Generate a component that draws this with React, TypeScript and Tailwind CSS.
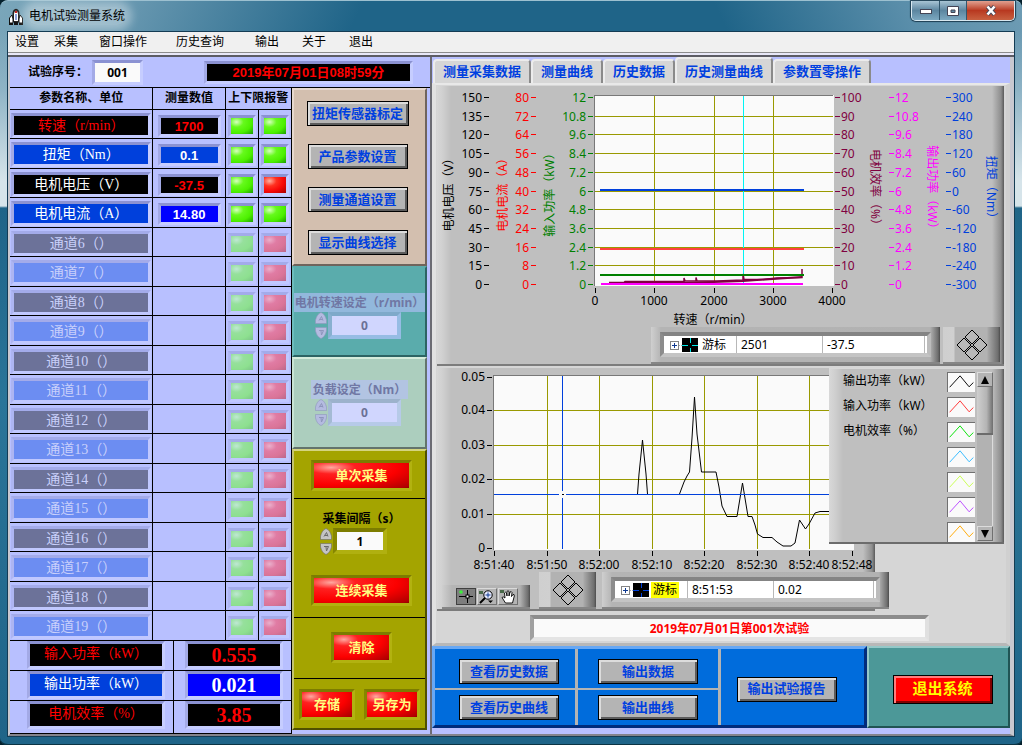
import React from "react";
import clsx from "clsx";

const UI = "font-['Noto_Sans','Noto_Sans_CJK_SC',sans-serif]";
const SONG = "font-['Liberation_Serif','Noto_Sans_CJK_SC',serif]";
const HEI = "font-['Liberation_Sans','Noto_Sans_CJK_SC',sans-serif]";

const BEVEL = "border-3 border-t-[#8b92d2] border-l-[#a3aae6] border-r-[#c6cdff] border-b-[#c6cdff]";
const BEVEL_DIM = "border-3 border-t-[#a3abea] border-l-[#adb5f2] border-r-[#c0c8ff] border-b-[#c0c8ff]";

type Level = "ok" | "bad" | "okDim" | "badDim";

const LED: Record<Level, string> = {
  ok: "bg-[radial-gradient(ellipse_at_25%_25%,#d8ffc0_0%,#66fa1c_30%,#4cf000_65%,#1c9a00_100%)]",
  bad: "bg-[radial-gradient(ellipse_at_25%_25%,#ffb0a0_0%,#ff3020_30%,#f80808_60%,#a80000_100%)]",
  okDim: "bg-[radial-gradient(ellipse_at_25%_25%,#bfe8d4_0%,#96e09c_30%,#8ee090_65%,#7cc488_100%)]",
  badDim: "bg-[radial-gradient(ellipse_at_25%_25%,#eab0cc_0%,#e07ca4_30%,#da7498_65%,#b8688c_100%)]",
};

function Led({ level, label }: { level: Level; label: string }) {
  const dim = level.endsWith("Dim");
  return (
    <span
      role="img"
      aria-label={label}
      className={clsx("mx-auto mt-[5px] block h-[22px] w-[28px]", dim ? BEVEL_DIM : BEVEL, LED[level])}
    />
  );
}

const params = [
  { name: "转速（r/min）", cls: "bg-black text-[#f00]", value: "1700", vcls: "bg-black text-[#f00]", low: "ok", high: "ok" },
  { name: "扭矩（Nm）", cls: "bg-[#0040dc] text-white", value: "0.1", vcls: "bg-[#0040dc] text-white", low: "ok", high: "ok" },
  { name: "电机电压（V）", cls: "bg-black text-white", value: "-37.5", vcls: "bg-black text-[#f00]", low: "ok", high: "bad" },
  { name: "电机电流（A）", cls: "bg-[#0040dc] text-white", value: "14.80", vcls: "bg-[#0000ff] text-white", low: "ok", high: "ok" },
] as const;

const channels = [6, 7, 8, 9, 10, 11, 12, 13, 14, 15, 16, 17, 18, 19];

const CELL = "border-b border-l border-black p-0 align-top first:border-l-0";

function ParameterTable() {
  return (
    <table className="w-full table-fixed border-separate border-spacing-0">
      <colgroup>
        <col className="w-[142px]" />
        <col className="w-[72px]" />
        <col className="w-[33px]" />
        <col className="w-[33px]" />
      </colgroup>
      <thead>
        <tr className={clsx("h-[22px] text-[12px] leading-[20px]", UI)}>
          <th className={CELL}>参数名称、单位</th>
          <th className={CELL}>测量数值</th>
          <th className={CELL} colSpan={2}>上下限报警</th>
        </tr>
      </thead>
      <tbody>
        {params.map((p) => (
          <tr key={p.name} className="odd:h-[29px] even:h-[30px]">
            <td className={CELL}>
              <div className={clsx("mx-px mt-[3px] h-[25px] text-center text-[14px] leading-[19px]", BEVEL, p.cls, SONG)}>{p.name}</div>
            </td>
            <td className={CELL}>
              <div className={clsx("mx-auto mt-[5px] h-[22px] w-[63px] text-center text-[13px] leading-[17px] font-bold", BEVEL, p.vcls, HEI)}>{p.value}</div>
            </td>
            <td className={CELL}><Led level={p.low} label="下限" /></td>
            <td className={CELL}><Led level={p.high} label="上限" /></td>
          </tr>
        ))}
        {channels.map((n) => (
          <tr key={n} className="odd:h-[29px] even:h-[30px]">
            <td className={CELL}>
              <div
                className={clsx(
                  "mx-px mt-[3px] h-[25px] text-center text-[14px] leading-[19px] text-[#c9d0fb]",
                  BEVEL_DIM,
                  SONG,
                  n % 2 ? "bg-[#6c8df2]" : "bg-[#6c7299]",
                )}
              >
                通道{n}（）
              </div>
            </td>
            <td className={CELL} />
            <td className={CELL}><Led level="okDim" label="下限" /></td>
            <td className={CELL}><Led level="badDim" label="上限" /></td>
          </tr>
        ))}
      </tbody>
    </table>
  );
}

const totals = [
  { name: "输入功率（kW）", value: "0.555", cls: "bg-black text-[#f00]", vcls: "bg-black text-[#f00]" },
  { name: "输出功率（kW）", value: "0.021", cls: "bg-[#0040dc] text-white", vcls: "bg-[#0000ff] text-white" },
  { name: "电机效率（%）", value: "3.85", cls: "bg-black text-[#f00]", vcls: "bg-black text-[#f00]" },
];

function TotalsTable() {
  return (
    <table className="w-full table-fixed border-separate border-spacing-0">
      <colgroup>
        <col className="w-[163px]" />
        <col />
      </colgroup>
      <tbody>
        {totals.map((t) => (
          <tr key={t.name} className="h-[30px] last:h-[33px]">
            <td className={CELL}>
              <div className={clsx("ml-[17px] h-[28px] w-[138px] text-center text-[14px] leading-[20px]", BEVEL, t.cls, SONG)}>{t.name}</div>
            </td>
            <td className={CELL}>
              <div className={clsx("ml-[11px] h-[28px] w-[98px] text-center text-[20px] leading-[23px] font-bold", BEVEL, t.vcls, SONG)}>{t.value}</div>
            </td>
          </tr>
        ))}
      </tbody>
    </table>
  );
}

function GrayButton({ children, className }: { children: string; className?: string }) {
  return (
    <button
      type="button"
      className={clsx(
        "h-[25px] border border-black bg-[#b4b4b4] text-[13px] leading-[22px] font-bold whitespace-nowrap text-[#0040e0]",
        "shadow-[inset_2px_2px_0_#dcdcdc,inset_-2px_-2px_0_#5c5c5c]",
        HEI,
        className,
      )}
    >
      {children}
    </button>
  );
}

function RedButton({ children, className }: { children: string; className: string }) {
  return (
    <button
      type="button"
      className={clsx(
        "h-[31px] border-3 border-t-[#7c7c00] border-l-[#868600] border-r-[#b2b210] border-b-[#b2b210] text-[13px] leading-[24px] font-bold text-[#ffff80]",
        "bg-[radial-gradient(ellipse_at_18%_18%,#ffa8a0_0%,#ff2020_22%,#fc0000_60%,#b00000_95%,#8c0000_100%)]",
        HEI,
        className,
      )}
    >
      {children}
    </button>
  );
}

function Spinner({ dim }: { dim?: boolean }) {
  const fill = dim ? "#b4bbe0" : "#c4c4c4";
  const edge = dim ? "#8e95bd" : "#6a6a6a";
  return (
    <span className="flex w-[13px] shrink-0 flex-col gap-[3px]">
      <button type="button" aria-label="增加" className="block h-3">
        <svg viewBox="0 0 12 12" className="size-3">
          <path d="M0.5 11.5V8Q2 2 6 0.5Q10 2 11.5 8V11.5Z" fill={fill} stroke={edge} strokeWidth="0.6" />
          <path d="M4 8.500L6.500 4.500L8 8.500M5 7.500H8" fill="none" stroke={edge} />
        </svg>
      </button>
      <button type="button" aria-label="减少" className="block h-3">
        <svg viewBox="0 0 12 12" className="size-3">
          <path d="M0.5 0.5V4Q2 10 6 11.500Q10 10 11.500 4V0.5Z" fill={fill} stroke={edge} strokeWidth="0.6" />
          <path d="M4 3.500H8.500L6.500 8L6 4" fill="none" stroke={edge} />
        </svg>
      </button>
    </span>
  );
}

function DimSetting({ id, label, labelClass, tone }: { id: string; label: string; labelClass: string; tone: string }) {
  return (
    <>
      <label htmlFor={id} className={clsx("block text-center text-[12px] leading-[19px] font-bold whitespace-nowrap text-[#7077a4]", labelClass)}>
        {label}
      </label>
      <div className="ml-[21px] flex">
        <Spinner dim />
        <input
          id={id}
          defaultValue="0"
          disabled
          className={clsx("h-[27px] w-[73px] border-4 bg-[#d0d6fe] text-center text-[12px] font-bold text-[#6b7196]", tone)}
        />
      </div>
    </>
  );
}

function Controls() {
  return (
    <div className={clsx("flex w-[135px] shrink-0 flex-col", UI)}>
      <section className="flex h-[178px] flex-col items-center gap-[18px] border-2 border-t-[#e6d8ce] border-r-[#70645c] border-b-[#70645c] border-l-[#e6d8ce] bg-[#d3bfaf] pt-[11px] pr-1">
        <GrayButton className="w-[102px]">扭矩传感器标定</GrayButton>
        <GrayButton className="w-[100px]">产品参数设置</GrayButton>
        <GrayButton className="w-[100px]">测量通道设置</GrayButton>
        <GrayButton className="w-[100px]">显示曲线选择</GrayButton>
      </section>
      <section className="h-[91px] border-2 border-t-[#5cacac] border-r-[#2c6464] border-b-[#2c6464] border-l-[#6cbcbc] bg-[#5aacac] pt-[25px]">
        <DimSetting id="speed" label="电机转速设定（r/min）" labelClass="bg-[#92b8dc]" tone="border-t-[#7ea9ca] border-l-[#88b0d0] border-r-[#96bce4] border-b-[#96bce4]" />
      </section>
      <section className="h-[92px] border-2 border-t-[#d4ecdc] border-r-[#64746c] border-b-[#64746c] border-l-[#c8e4d4] bg-[#accebe] pt-[21px]">
        <DimSetting id="load" label="负载设定（Nm）" labelClass="mx-auto w-[97px] bg-[#b2c4e2]" tone="border-t-[#9cb2cc] border-l-[#a4bad4] border-r-[#b6cae8] border-b-[#b6cae8]" />
      </section>
      <section className="border-2 border-t-[#d4d480] border-r-[#505000] border-b-[#505000] border-l-[#c4c470] bg-[#a4a400]">
        <div className="flex h-[48px] justify-center border-b border-black pt-[9px] pl-1">
          <RedButton className="w-[101px]">单次采集</RedButton>
        </div>
        <div className="flex h-[119px] flex-col items-center border-b border-black pt-[10px] pl-1">
          <label htmlFor="interval" className="text-[12px] leading-[19px] font-bold">采集间隔（s）</label>
          <div className="-ml-4 flex">
            <Spinner />
            <input
              id="interval"
              defaultValue="1"
              className="h-[26px] w-[54px] border-4 border-t-[#7c7c00] border-r-[#b0b010] border-b-[#b0b010] border-l-[#868600] bg-[#fafafa] text-center text-[12px] font-bold text-black"
            />
          </div>
          <RedButton className="mt-5 w-[101px]">连续采集</RedButton>
        </div>
        <div className="flex h-[61px] justify-center border-b border-black pt-[14px] pl-1">
          <RedButton className="w-[61px]">清除</RedButton>
        </div>
        <div className="flex h-[49px] justify-center gap-[9px] pt-[10px]">
          <RedButton className="w-[56px]">存储</RedButton>
          <RedButton className="w-[56px]">另存为</RedButton>
        </div>
      </section>
    </div>
  );
}

/* ---------- speed chart ---------- */

const PLOT = { left: 158, right: 396, top: 11, bottom: 198 };
const steps = Array.from({ length: 11 }, (_, i) => i);
const yStep = (i: number) => Math.round(PLOT.bottom - ((PLOT.bottom - PLOT.top) * i) / 10) + 0.5;

const axesLeft = [
  { x: 45, color: "#000", title: "电机电压（V）", tx: 12, values: steps.map((i) => `${i * 15}`) },
  { x: 92, color: "#f00", title: "电机电流（A）", tx: 66, values: steps.map((i) => `${i * 8}`) },
  { x: 149, color: "#008000", title: "输入功率（kW）", tx: 113, values: steps.map((i) => `${Number((i * 1.2).toFixed(1))}`) },
];
const axesRight = [
  { x: 398, color: "#7f0040", title: "电机效率（%）", tx: 438, cy: 104, values: steps.map((i) => `${i * 10}`) },
  { x: 452, color: "#f0f", title: "输出功率（kW）", tx: 495, cy: 104, values: steps.map((i) => `${Number((i * 1.2).toFixed(1))}`) },
  { x: 509, color: "#0040dc", title: "扭矩（Nm）", tx: 554, cy: 104, values: steps.map((i) => `${i * 60 - 300}`) },
];

function SpeedChart() {
  return (
    <svg width="566" height="241" viewBox="0 0 566 241" className={clsx("block text-[12px]", UI)} role="img" aria-label="历史测量曲线">
      <rect x="157" y="9" width="240" height="191" fill="#fafafa" />
      <path d="M157 9.500H396M157.500 9V200" stroke="#787878" fill="none" />
      <g stroke="#999900">
        {steps.slice(1, 10).map((i) => <path key={i} d={`M158 ${yStep(i)}H396`} />)}
        <path d="M217.500 10V199M277.500 10V199M336.500 10V199" />
      </g>
      <path d="M306.500 10V199" stroke="#00f4f4" />
      <path d="M163 104H367" stroke="#0040dc" strokeWidth="2" />
      <path d="M163 163H367" stroke="#ff4040" strokeWidth="2" />
      <path d="M172 196.500H187L188 195.500H247V192L248 195H259V191.500L260 195H280L306 194V188L307 193.500H324L340 192L365 191.500V183" stroke="#7f0040" strokeWidth="1.500" fill="none" />
      <path d="M187 197H247L306 195L365 191" stroke="#7f0040" strokeWidth="2" fill="none" />
      <path d="M163 189H367" stroke="#008000" strokeWidth="2" />
      <path d="M164 198H366" stroke="#f0f" strokeWidth="2" />
      {axesLeft.map((a) => (
        <g key={a.title} fill={a.color}>
          {a.values.map((v, i) => (
            <g key={i}>
              <text x={a.x} y={yStep(i) + 4} textAnchor="end">{v}</text>
              <path d={`M${a.x + 2} ${yStep(i)}h5`} stroke={a.color} />
            </g>
          ))}
          <text transform={`rotate(-90 ${a.tx} 106)`} x={a.tx} y="110" textAnchor="middle">{a.title}</text>
        </g>
      ))}
      {axesRight.map((a) => (
        <g key={a.title} fill={a.color}>
          {a.values.map((v, i) => (
            <g key={i}>
              <text x={a.x + 6} y={yStep(i) + 4}>{v}</text>
              <path d={`M${a.x} ${yStep(i)}h5`} stroke={a.color} />
            </g>
          ))}
          <text transform={`rotate(90 ${a.tx} ${a.cy})`} x={a.tx} y={a.cy + 4} textAnchor="middle">{a.title}</text>
        </g>
      ))}
      {[158, 217, 277, 336, 395].map((x, i) => (
        <g key={x}>
          <path d={`M${x + 0.5} 202v5`} stroke="#000" />
          <text x={x} y="219" textAnchor="middle">{i * 1000}</text>
        </g>
      ))}
      <text x="276" y="238" textAnchor="middle">转速（r/min）</text>
    </svg>
  );
}

/* ---------- time chart ---------- */

const timeTicks: [number, string][] = [
  [57, "8:51:40"], [110, "8:51:50"], [162, "8:52:00"], [215, "8:52:10"],
  [267, "8:52:20"], [320, "8:52:30"], [372, "8:52:40"], [415, "8:52:48"],
];
const levels: [number, string][] = [[9, "0.05"], [42, "0.04"], [77, "0.03"], [111, "0.02"], [146, "0.01"], [180, "0"]];

function TimeChart() {
  return (
    <svg width="438" height="204" viewBox="0 0 438 204" className={clsx("block text-[12px]", UI)} role="img" aria-label="输出功率曲线">
      <rect x="56" y="7" width="361" height="175" fill="#fafafa" />
      <path d="M56 7.500H417M56.500 7V182" stroke="#787878" fill="none" />
      <path d="M57 42.500H417M57 77.500H417M57 111.500H417M57 146.500H417M110.500 8V181M162.500 8V181M215.500 8V181M267.500 8V181M320.500 8V181M372.500 8V181" stroke="#999900" />
      <path
        d="M200.500 126L202 106L205.500 72L209 106L210.500 126M242.500 126L247 114L250 108L252.500 104L255 70L257.500 29L260 66L264.500 104H279L282 119L285 138L290 148.500H300L305.500 115L311 148.500H315L318 157L320.500 166L326 169.500H335L340 174L346 178H354L358 175L362.500 152L368.500 161L372 156L378 145L383 143.500H400"
        fill="none"
        stroke="#000"
      />
      <path d="M57 126.500H123M129 126.500H417M125.500 8V123M125.500 130V181" stroke="#0040dc" />
      <path d="M122 126.500h5" stroke="#fff" />
      <path d="M125 126.500h2" stroke="#000" />
      {levels.map(([y, v]) => (
        <g key={v}>
          <text x="48" y={y + 4} textAnchor="end">{v}</text>
          <path d={`M50 ${y + 0.5}h5`} stroke="#000" />
        </g>
      ))}
      {timeTicks.map(([x, v]) => (
        <g key={v}>
          <path d={`M${x + 0.5} 183v5`} stroke="#000" />
          <text x={x} y="201" textAnchor="middle">{v}</text>
        </g>
      ))}
    </svg>
  );
}

const PANEL = "bg-[linear-gradient(90deg,#d8d8d8_0px,#cfcfcf_6px,#bfbfbf_14px,#bfbfbf_calc(100%-12px),#8e8e8e_calc(100%-3px),#5a5a5a_100%)]";
const SUBPANEL = "border-b-2 border-[#868686] bg-[linear-gradient(90deg,#cfcfcf_0px,#b4b4b4_10px,#b2b2b2_calc(100%-10px),#6e6e6e_calc(100%-2px),#4c4c4c_100%)]";

function CursorLegend({ x, y, line, active, className }: { x: string; y: string; line: string; active?: boolean; className?: string }) {
  return (
    <div className={clsx("flex items-center", SUBPANEL, className)}>
      <div className="flex h-[25px] w-full border-4 border-t-[#848484] border-r-[#bcbcbc] border-b-[#c4c4c4] border-l-[#8c8c8c] bg-white text-[12px] leading-[17px]">
        <span className="flex w-[73px] shrink-0 items-center border-r border-[#b8b8b8] pl-1.5">
          <svg width="28" height="16" viewBox="0 0 28 16" aria-hidden="true">
            <rect x="0.500" y="4.500" width="8" height="8" fill="#fff" stroke="#848484" />
            <path d="M2 8.500h5M4.500 6v5" stroke="#103a90" />
            <path d="M9 8.500h3" stroke="#aaa" strokeDasharray="1 1" />
            <rect x="12" y="1" width="16" height="14" fill="#000" />
            <path d="M12 8.500h6M22 8.500h6M20.500 1v5M20.500 11v4" stroke={line} />
          </svg>
          <span className={clsx("ml-0.5 px-0.5 leading-[16px]", active && "bg-[#ff0]")}>游标</span>
        </span>
        <input aria-label="游标 X" defaultValue={x} className="w-[86px] min-w-0 border-r border-[#b8b8b8] px-1" />
        <input aria-label="游标 Y" defaultValue={y} className="min-w-0 flex-1 border-r border-[#b8b8b8] px-1" />
        <span className="w-0.5" />
      </div>
    </div>
  );
}

function NavPad() {
  return (
    <button
      type="button"
      aria-label="移动游标"
      className="flex h-[37px] w-[57px] shrink-0 items-center justify-center border-b-2 border-[#868686] bg-[linear-gradient(90deg,#cfcfcf_0px,#d0d0d0_11px,#b2b2b2_12px,#b2b2b2_44px,#a8a8a8_45px,#6e6e6e_55px,#4c4c4c_57px)]"
    >
      <svg width="32" height="32" viewBox="0 0 32 32" fill="#b8b8b8" stroke="#000" strokeWidth="1">
        <path d="M16 1L23 8L16 15L9 8ZM16 17L23 24L16 31L9 24ZM8 9L15 16L8 23L1 16ZM24 9L31 16L24 23L17 16Z" />
      </svg>
    </button>
  );
}

function GraphTools() {
  const tool = "flex h-[17px] w-5 items-center justify-center border";
  return (
    <div className={clsx("flex h-[24px] w-[89px] items-center gap-px self-end pl-[14px]", SUBPANEL)}>
      <button type="button" aria-label="游标移动" className={clsx(tool, "border-[#404040] bg-[#7e7e7e]")}>
        <svg width="18" height="15" viewBox="0 0 18 15">
          <path d="M2 7.500H16M10.500 1V14" stroke="#000" />
          <rect x="9" y="6" width="3" height="3" fill="#eee" stroke="#000" />
          <circle cx="4" cy="3" r="1.800" fill="#3cf03c" />
        </svg>
      </button>
      <button type="button" aria-label="缩放" className={clsx(tool, "border-[#dadada] border-r-[#707070] border-b-[#707070] bg-[#b4b4b4]")}>
        <svg width="18" height="15" viewBox="0 0 18 15">
          <rect x="1" y="2" width="4" height="3" fill="#486848" />
          <path d="M7 9L2 14" stroke="#000" strokeWidth="2" />
          <circle cx="10" cy="6" r="4.200" fill="#e8ecff" stroke="#000" />
          <path d="M7.500 6h5M10 3.500v5" stroke="#103a90" />
          <path d="M10 11.500h5l-2.500 2.500z" />
        </svg>
      </button>
      <button type="button" aria-label="平移" className={clsx(tool, "border-[#dadada] border-r-[#707070] border-b-[#707070] bg-[#b4b4b4]")}>
        <svg width="18" height="15" viewBox="0 0 18 15">
          <rect x="1" y="1" width="4" height="3" fill="#486848" />
          <path d="M6.500 14L3 8.500Q4 7 6 9L5.500 4Q6.500 2.500 7.500 4L8 7V2.500Q9 1 10 2.500V7L11 3Q12.500 2 13 3.500L12.500 7.500L14 5.500Q15.500 5 15.300 7L13.500 14Z" fill="#fff" stroke="#000" strokeWidth="0.900" />
        </svg>
      </button>
    </div>
  );
}

const legend = [
  { name: "输出功率（kW）", color: "#000000" },
  { name: "输入功率（kW）", color: "#ff3030" },
  { name: "电机效率（%）", color: "#00e000" },
  { name: "", color: "#30b8ff" },
  { name: "", color: "#c8ff50" },
  { name: "", color: "#b848ff" },
  { name: "", color: "#ffa800" },
];

function PlotLegend() {
  const arrow = "flex h-[15px] w-4 items-center justify-center border border-[#dcdcdc] border-r-[#707070] border-b-[#707070] bg-[#b4b4b4]";
  return (
    <div className={clsx("absolute top-0 right-0 flex h-[176px] w-[175px] gap-0.5 border-t border-b-2 border-t-[#d8d8d8] border-b-[#6c6c6c] pt-[3px] pb-px pl-[14px]", PANEL)}>
      <ul className="flex w-[132px] flex-col gap-[5px] text-[12px] leading-[18px]">
        {legend.map((l) => (
          <li key={l.color} className="flex h-5 justify-between">
            <span>{l.name}</span>
            <svg width="28" height="20" viewBox="0 0 28 20" className="shrink-0 border-t border-l border-[#707070] bg-[#fafafa]" aria-hidden="true">
              <path d="M1.500 15L12.500 3L22 14.500L26.500 10" fill="none" stroke={l.color} />
            </svg>
          </li>
        ))}
      </ul>
      <div className="flex w-4 flex-col bg-[#b2b2b2]">
        <button type="button" aria-label="向上滚动" className={arrow}>
          <svg width="8" height="8" viewBox="0 0 8 8"><path d="M4 0L8 8H0Z" /></svg>
        </button>
        <div className="h-[48px] border-b-2 border-[#6c6c6c] bg-[linear-gradient(90deg,#cfcfcf,#b4b4b4_60%,#6e6e6e)]" />
        <div className="flex-1 border-r border-[#dcdcdc]" />
        <button type="button" aria-label="向下滚动" className={arrow}>
          <svg width="8" height="8" viewBox="0 0 8 8"><path d="M4 8L8 0H0Z" /></svg>
        </button>
      </div>
    </div>
  );
}

const tabs = ["测量采集数据", "测量曲线", "历史数据", "历史测量曲线", "参数置零操作"];

const QUAD = "grid grid-rows-[41px_1fr] border-r-3 border-[#b4b4b4]";

function Monitor() {
  return (
    <div className={clsx("flex min-w-0 flex-1 flex-col", UI)}>
      <div role="tablist" className={clsx("flex items-end pl-px text-[13px] font-bold text-[#0040e0]", HEI)}>
        {tabs.map((t) => {
          const on = t === "历史测量曲线";
          return (
            <button
              key={t}
              type="button"
              role="tab"
              aria-selected={on}
              className={clsx(
                "rounded-t-sm border-t-2 border-r-2 border-l-2 border-t-[#ececec] border-r-[#8a8a8a] border-l-[#ececec] bg-[#d6d6d6] px-[8px] whitespace-nowrap",
                on ? "h-[26px] leading-[19px]" : "h-[24px] leading-[20px]",
              )}
            >
              {t}
            </button>
          );
        })}
      </div>
      <div className="border-t-2 border-r-4 border-b-3 border-l-4 border-t-[#e8e8e8] border-r-[#d0d0d0] border-b-[#b8b8b8] border-l-[#e2e2e2] bg-[#d6d6d6] pt-px pr-[2px] pb-[2px] pl-px">
        <div className={clsx("border-b-2 border-[#7c7c7c]", PANEL)}>
          <SpeedChart />
          <div className="flex justify-end gap-[3px] pr-1">
            <CursorLegend x="2501" y="-37.5" line="#00e8e8" className="w-[289px] pr-[9px] pl-[9px]" />
            <NavPad />
          </div>
        </div>
        <div className="relative mt-[2px]">
          <div className={clsx("w-[438px] border-b-2 border-[#7c7c7c]", PANEL)}>
            <TimeChart />
            <div className="flex w-[452px] gap-[6px] pl-[5px]">
              <GraphTools />
              <div className="ml-[3px] flex shrink-0"><NavPad /></div>
              <CursorLegend x="8:51:53" y="0.02" line="#0040dc" active className="h-[37px] w-[287px] shrink-0 pr-[9px] pl-[9px]" />
            </div>
          </div>
          <PlotLegend />
        </div>
        <input
          aria-label="试验记录"
          readOnly
          value="2019年07月01日第001次试验"
          className="mt-[4px] ml-[93px] block h-[26px] w-[399px] border-4 border-t-[#8c8c8c] border-r-[#e0e0e0] border-b-[#e4e4e4] border-l-[#a0a0a0] bg-[#fafafa] text-center text-[12px] font-bold text-[#f00]"
        />
      </div>
      <div className="flex h-[82px]">
        <div className="grid min-w-0 flex-1 grid-cols-3 border-3 border-t-[#68a8f4] border-r-[#002c7c] border-b-[#002c7c] border-l-[#68a8f4] bg-[#006cdc]">
          <div className={QUAD}>
            <div className="flex items-end justify-center border-b-2 border-[#b4b4b4] pb-1 pl-2"><GrayButton className="w-[100px]">查看历史数据</GrayButton></div>
            <div className="flex items-center justify-center pl-2"><GrayButton className="w-[100px]">查看历史曲线</GrayButton></div>
          </div>
          <div className={QUAD}>
            <div className="flex items-end justify-center border-b-2 border-[#b4b4b4] pb-1"><GrayButton className="w-[100px]">输出数据</GrayButton></div>
            <div className="flex items-center justify-center"><GrayButton className="w-[100px]">输出曲线</GrayButton></div>
          </div>
          <div className="flex items-center justify-center pt-1 pr-3"><GrayButton className="w-[100px]">输出试验报告</GrayButton></div>
        </div>
        <div className="flex w-[143px] shrink-0 items-center justify-center border-2 border-t-[#94c8c8] border-r-[#205454] border-b-[#205454] border-l-[#94c8c8] bg-[#4c9898] pt-1 pl-2">
          <button
            type="button"
            className={clsx("h-[29px] w-[100px] border border-black bg-[#f00] text-[15px] leading-[26px] font-bold text-[#ff0] shadow-[inset_2px_2px_0_#ff7c7c,inset_-2px_-2px_0_#800000]", HEI)}
          >
            退出系统
          </button>
        </div>
      </div>
    </div>
  );
}

const menus = [
  { name: "设置", gap: "mr-[15px]" },
  { name: "采集", gap: "mr-[21px]" },
  { name: "窗口操作", gap: "mr-[29px]" },
  { name: "历史查询", gap: "mr-[31px]" },
  { name: "输出", gap: "mr-[23px]" },
  { name: "关于", gap: "mr-[23px]" },
  { name: "退出", gap: "" },
];

function TitleBar() {
  return (
    <header className="flex h-[30px] items-start justify-between">
      <div className="flex items-center pt-[6px] pl-px">
        <svg width="16" height="17" viewBox="0 0 16 17" aria-hidden="true">
          <path d="M4.500 14V5Q5 1 8 0.700Q11 1 11.500 5V14Z" fill="#222" />
          <path d="M6 13V5.500Q6.500 3 8 2.500Q9.500 3 10 5.500V13Z" fill="#fff" />
          <path d="M4 7L1.500 10V15H5V11ZM12 7L14.500 10V15H11V11Z" fill="#fff" stroke="#111" />
          <path d="M7 3h2v2H7z" fill="#c02020" />
          <path d="M8 6V12" stroke="#4060c0" strokeWidth="1.200" />
          <path d="M1 15h4v2H1zM6 14h4v3H6zM11 15h4v2h-4z" fill="#111" />
        </svg>
        <h1 className="ml-1 rounded-full bg-white/35 px-px text-[12px] leading-[18px] shadow-[0_0_8px_6px_rgba(255,255,255,0.35)]">电机试验测量系统</h1>
      </div>
      <div className="flex h-5 overflow-hidden rounded-b-[5px] border border-t-0 border-[#d8e8f0] shadow-[0_0_1px_1px_#1c3c50]">
        <button type="button" aria-label="最小化" className="flex w-[28px] items-center justify-center border-r border-[#32566c] bg-linear-to-b from-[#a8c4d4] via-[#5c86a0] to-[#7ca8c0]">
          <svg width="12" height="6" viewBox="0 0 12 6"><rect x="0.500" y="1.500" width="11" height="4" fill="#fff" stroke="#445" /></svg>
        </button>
        <button type="button" aria-label="最大化" className="flex w-[27px] items-center justify-center border-r border-[#32566c] bg-linear-to-b from-[#a8c4d4] via-[#5c86a0] to-[#7ca8c0]">
          <svg width="12" height="10" viewBox="0 0 12 10"><path fillRule="evenodd" d="M0.500 0.500h11v9h-11zM4 4h4v2.500h-4z" fill="#fff" stroke="#445" /></svg>
        </button>
        <button type="button" aria-label="关闭" className="flex w-[47px] items-center justify-center bg-linear-to-b from-[#e0a090] via-[#b83820] to-[#c86040]">
          <svg width="12" height="11" viewBox="0 0 12 11"><path d="M2.500 1.500L9.500 9.500M9.500 1.500L2.500 9.500" stroke="#445" strokeWidth="4.200" /><path d="M2.500 1.500L9.500 9.500M9.500 1.500L2.500 9.500" stroke="#fff" strokeWidth="2.600" /></svg>
        </button>
      </div>
    </header>
  );
}

const GLASS =
  "[background:linear-gradient(180deg,transparent_30px,#8fb4c6_90px,#d6e4ea_180px,#d6e4ea_205px,#1f6488_207px,#2a7599_400px,#1f6488_100%)_left_top/8px_100%_no-repeat,linear-gradient(180deg,transparent_30px,#8fb4c6_90px,#d6e4ea_180px,#d6e4ea_205px,#1f6488_207px,#2a7599_400px,#1f6488_100%)_right_top/8px_100%_no-repeat,linear-gradient(115deg,#7aa6ba_0px,#6b9ab2_110px,transparent_330px)_left_top/100%_200px_no-repeat,linear-gradient(245deg,#6e9cb4_0px,#5a8eaa_110px,transparent_280px)_left_top/100%_200px_no-repeat,#1f6488]";

export default function App() {
  return (
    <div className="min-h-screen bg-[#04202c]">
      <div
        className={clsx(
          "flex min-h-screen flex-col rounded-lg border-t border-b-2 border-t-[#9cc0d0] border-b-[#0c3444] px-[7px] pb-[7px] text-black",
          GLASS,
          UI,
        )}
      >
        <TitleBar />
        <div className="flex flex-1 flex-col border border-[#143c54] bg-[#b8c0ff]">
          <nav className="flex h-[20px] items-center bg-[#f0f0f0] pl-[7px] text-[12px] leading-[18px]">
            {menus.map((m) => (
              <button key={m.name} type="button" className={m.gap}>{m.name}</button>
            ))}
          </nav>
          <div className="h-[5px] border-t border-b-2 border-t-[#8c8c8c] border-b-[#5c5c64] bg-[#e8e8f8]" />
          <main className="flex flex-1 border-r-4 border-b-2 border-l-2 border-[#c8c8d0] border-b-[#84848c]">
            <div className="w-[422px] shrink-0 border-r-2 border-[#6c6c74]">
              <div className={clsx("flex h-[31px] items-center justify-between border-b border-black pr-[17px] pl-[18px] text-[12px] font-bold")}>
                <div className="flex items-center">
                  <label htmlFor="serial">试验序号：</label>
                  <input id="serial" defaultValue="001" className={clsx("ml-1 h-[25px] w-[51px] bg-[#fafafa] text-center", BEVEL)} />
                </div>
                <output className={clsx("h-[23px] w-[209px] bg-black text-center text-[13px] leading-[18px] text-[#f00]", BEVEL, HEI)}>2019年07月01日08时59分</output>
              </div>
              <div className="flex">
                <div className="w-[282px] shrink-0 border-r border-black">
                  <ParameterTable />
                  <TotalsTable />
                </div>
                <Controls />
              </div>
            </div>
            <Monitor />
          </main>
        </div>
      </div>
    </div>
  );
}
